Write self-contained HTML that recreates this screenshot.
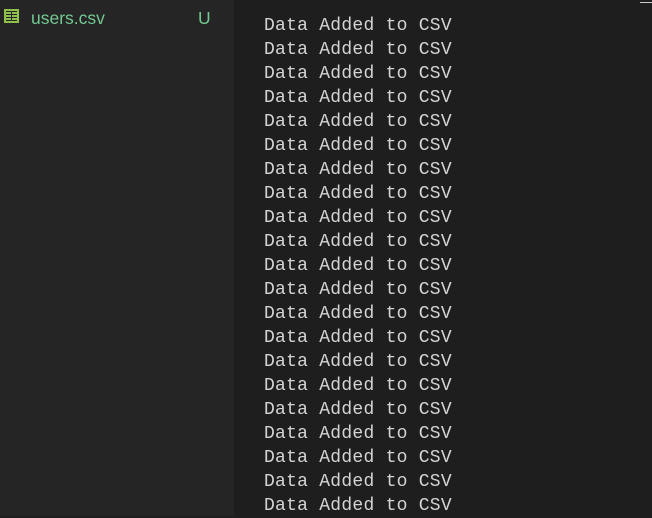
<!DOCTYPE html>
<html><head><style>
html,body{margin:0;padding:0;width:652px;height:516px;overflow:hidden;background:#1e1e1e;}
.side{position:absolute;left:0;top:0;width:234px;height:516px;background:#252526;}
.file{position:absolute;left:0;top:8px;height:22px;width:234px;font-family:"Liberation Sans",sans-serif;font-size:17.5px;color:#73c991;}
.file .name{position:absolute;left:31px;top:0;}
.file .u{position:absolute;left:198px;top:0;}
.icon{position:absolute;left:4px;top:1px;width:15px;height:14px;background:#8dc149;}
.icon i{position:absolute;background:#252526;}
.out{position:absolute;left:264px;top:14px;font-family:"Liberation Mono",monospace;font-size:18px;letter-spacing:0.25px;line-height:24px;color:#d4d4d4;white-space:pre;}
.bar{position:absolute;left:640px;top:2px;width:12px;height:1px;background:#cccccc;}
</style></head><body>
<div class="side">
 <div class="file">
  <div class="icon">
   <i style="left:2px;top:2px;width:11px;height:1px"></i>
   <i style="left:2px;top:5px;width:11px;height:1px"></i>
   <i style="left:2px;top:8px;width:11px;height:1px"></i>
   <i style="left:2px;top:11px;width:11px;height:1px"></i>
   <i style="left:7px;top:2px;width:1px;height:10px"></i>
  </div>
  <span class="name">users.csv</span><span class="u">U</span>
 </div>
</div>
<div class="bar"></div>
<div class="out">Data Added to CSV
Data Added to CSV
Data Added to CSV
Data Added to CSV
Data Added to CSV
Data Added to CSV
Data Added to CSV
Data Added to CSV
Data Added to CSV
Data Added to CSV
Data Added to CSV
Data Added to CSV
Data Added to CSV
Data Added to CSV
Data Added to CSV
Data Added to CSV
Data Added to CSV
Data Added to CSV
Data Added to CSV
Data Added to CSV
Data Added to CSV</div>
</body></html>
